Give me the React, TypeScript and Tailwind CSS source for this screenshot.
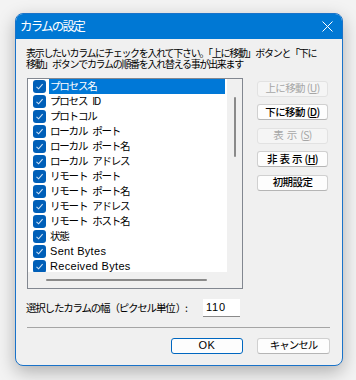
import { useState } from 'react'

const COLUMNS = [
  { label: 'プロセス名', latin: false },
  { label: 'プロセス ID', latin: false },
  { label: 'プロトコル', latin: false },
  { label: 'ローカル ポート', latin: false },
  { label: 'ローカル ポート名', latin: false },
  { label: 'ローカル アドレス', latin: false },
  { label: 'リモート ポート', latin: false },
  { label: 'リモート ポート名', latin: false },
  { label: 'リモート アドレス', latin: false },
  { label: 'リモート ホスト名', latin: false },
  { label: '状態', latin: false },
  { label: 'Sent Bytes', latin: true },
  { label: 'Received Bytes', latin: true },
]

const jp = "font-['Noto_Sans_CJK_JP','Noto_Sans',sans-serif]"

function CheckBox() {
  return (
    <span className="w-[13px] h-[13px] shrink-0 rounded-[3px] bg-[#005fb8] flex items-center justify-center">
      <svg width="9" height="9" viewBox="0 0 9 9" fill="none" stroke="#cfe2f5" strokeWidth="1.1">
        <polyline points="1.5,4.8 3.6,6.8 7.6,2.2" />
      </svg>
    </span>
  )
}

function Label({ text }: { text: string }) {
  // japanese items keep a visible gap where the original has a space
  const parts = text.split(' ')
  return (
    <>
      {parts.map((p, i) => (
        <span key={i} className={i > 0 ? 'ml-[5px]' : ''}>
          {p}
        </span>
      ))}
    </>
  )
}

function SideButton({ children, disabled }: { children: React.ReactNode; disabled?: boolean }) {
  return (
    <button
      className={`h-[16px] w-[71px] rounded-[3px] border text-[10.5px] leading-none flex items-center justify-center tracking-[-0.6px] ${
        disabled ? 'border-[#e2e2e2] bg-[#f5f5f5] text-[#a6a6a6]' : 'border-[#d0d0d0] border-b-[#b5b5b5] bg-[#fdfdfd] text-black font-medium'
      }`}
    >
      {children}
    </button>
  )
}

export default function App() {
  const [selected, setSelected] = useState(0)

  return (
    <div className={`w-[356px] h-[380px] bg-[#f3f3f3] overflow-hidden pt-[13px] pl-[15px] ${jp}`}>
      <div className="w-[328px] h-[353px] rounded-[8px] border border-[#1a73c9] bg-[#f0f0f0] overflow-hidden shadow-[0_6px_18px_rgba(0,0,0,0.28)] flex flex-col">
        {/* Title bar */}
        <div className="h-[25px] shrink-0 bg-[#0078d4] flex items-center justify-between pl-[4px] pr-[9px]">
          <span className="text-white text-[12.5px] tracking-[-1.8px] leading-none">カラムの設定</span>
          <svg width="11" height="11" viewBox="0 0 11 11" stroke="white" strokeWidth="1">
            <line x1="0.5" y1="0.5" x2="10.5" y2="10.5" />
            <line x1="10.5" y1="0.5" x2="0.5" y2="10.5" />
          </svg>
        </div>

        {/* Body */}
        <div className="flex-1 flex flex-col pl-[11px] pr-[12px] pt-[8px]">
          <div className="text-[10px] tracking-[-1.3px] text-black -ml-px flex flex-col">
            <span className="h-[11px] leading-[11px] whitespace-nowrap">表示したいカラムにチェックを入れて下さい。「上に移動」ボタンと「下に</span>
            <span className="h-[11px] leading-[11px] whitespace-nowrap">移動」ボタンでカラムの順番を入れ替える事が出来ます</span>
          </div>

          <div className="flex mt-[8.5px]">
            {/* List */}
            <div className="w-[216px] h-[211px] border border-[#828790] bg-[#f0f0f0] flex flex-col">
              <div className="flex flex-1 min-h-0">
                <div className="w-[199px] h-[193px] bg-white overflow-hidden flex flex-col">
                  {COLUMNS.map((c, i) => (
                    <div key={c.label} className="h-[15px] shrink-0 flex items-center pl-[5px]" onClick={() => setSelected(i)}>
                      <CheckBox />
                      <span
                        className={`ml-[3px] mr-[2px] flex-1 h-[15px] flex items-center pl-[1px] leading-none ${
                          c.latin ? "font-['Liberation_Sans',sans-serif] text-[11px] tracking-[0.3px]" : 'text-[10.5px] tracking-[-1.2px]'
                        } ${selected === i ? 'bg-[#0078d7] text-white' : 'text-black'}`}
                      >
                        {c.latin ? c.label : <Label text={c.label} />}
                      </span>
                    </div>
                  ))}
                </div>
                <div className="flex-1 flex justify-center pt-[18px]">
                  <div className="w-[2px] h-[60px] bg-[#8a8a8a] rounded-full" />
                </div>
              </div>
              <div className="h-[16px] flex items-center pl-[18px]">
                <div className="w-[161px] h-[2px] bg-[#8a8a8a] rounded-full" />
              </div>
            </div>

            {/* Side buttons */}
            <div className="ml-[14px] pt-[3px] flex flex-col gap-[7.5px]">
              <SideButton disabled>
                上に移動 (<span className="underline">U</span>)
              </SideButton>
              <SideButton>
                下に移動 (<span className="underline">D</span>)
              </SideButton>
              <SideButton disabled>
                <span className="tracking-[3px]">表示</span> (<span className="underline">S</span>)
              </SideButton>
              <SideButton>
                <span className="tracking-[2px]">非表示</span>(<span className="underline">H</span>)
              </SideButton>
              <SideButton>初期設定</SideButton>
            </div>
          </div>

          {/* Width row */}
          <div className="flex items-center mt-[10px] h-[18px]">
            <span className="text-[10.5px] tracking-[-1.2px] text-black -ml-px w-[177px] whitespace-nowrap">選択したカラムの幅（ピクセル単位 ）:</span>
            <div className="w-[37px] h-[18px] bg-white border-b border-[#8a8a8a] flex items-center pl-[3px] font-['Liberation_Sans',sans-serif] text-[11px] tracking-[0.8px] text-black">
              110
            </div>
          </div>

          <div className="mt-[10px] h-px bg-[#a5a5a5]" />

          {/* Footer buttons */}
          <div className="mt-[10px] flex justify-end gap-[14px]">
            <button className="w-[72px] h-[16px] rounded-[3px] border border-[#0067c0] bg-[#fdfdfd] text-[11px] leading-none font-['Liberation_Sans',sans-serif] tracking-[0.5px] text-black flex items-center justify-center">
              OK
            </button>
            <button className="w-[73px] h-[16px] rounded-[3px] border border-[#d0d0d0] border-b-[#b5b5b5] bg-[#fdfdfd] text-[10.5px] leading-none tracking-[-1px] text-black flex items-center justify-center">
              キャンセル
            </button>
          </div>
        </div>
      </div>
    </div>
  )
}
